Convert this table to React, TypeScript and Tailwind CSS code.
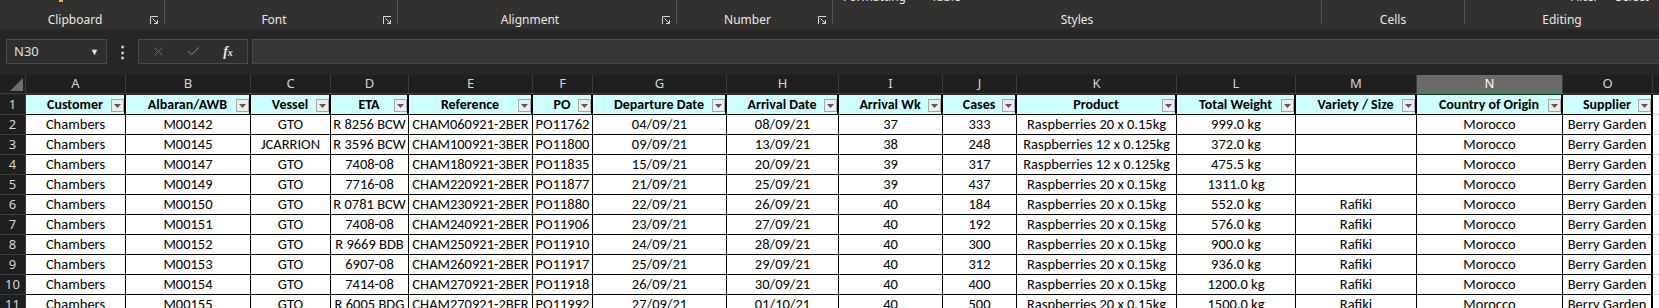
import React from "react";
import { X, Check } from "lucide-react";

const uiFont = { fontFamily: '"Noto Sans", "Open Sans", sans-serif' };
const cellFont = { fontFamily: 'Carlito, Lato, "Liberation Sans", sans-serif' };

const cols = [
  { l: "A", h: "Customer" },
  { l: "B", h: "Albaran/AWB" },
  { l: "C", h: "Vessel" },
  { l: "D", h: "ETA" },
  { l: "E", h: "Reference" },
  { l: "F", h: "PO" },
  { l: "G", h: "Departure Date" },
  { l: "H", h: "Arrival Date" },
  { l: "I", h: "Arrival Wk" },
  { l: "J", h: "Cases" },
  { l: "K", h: "Product" },
  { l: "L", h: "Total Weight" },
  { l: "M", h: "Variety / Size" },
  { l: "N", h: "Country of Origin" },
  { l: "O", h: "Supplier" },
];

const p20 = "Raspberries 20 x 0.15kg";
const p12 = "Raspberries 12 x 0.125kg";

// [awb, vessel, eta, ref, po, dep, arr, wk, cases, product, weight, variety]
const rows = [
  ["M00142", "GTO", "R 8256 BCW", "CHAM060921-2BER", "PO11762", "04/09/21", "08/09/21", "37", "333", p20, "999.0 kg", ""],
  ["M00145", "JCARRION", "R 3596 BCW", "CHAM100921-3BER", "PO11800", "09/09/21", "13/09/21", "38", "248", p12, "372.0 kg", ""],
  ["M00147", "GTO", "7408-08", "CHAM180921-3BER", "PO11835", "15/09/21", "20/09/21", "39", "317", p12, "475.5 kg", ""],
  ["M00149", "GTO", "7716-08", "CHAM220921-2BER", "PO11877", "21/09/21", "25/09/21", "39", "437", p20, "1311.0 kg", ""],
  ["M00150", "GTO", "R 0781 BCW", "CHAM230921-2BER", "PO11880", "22/09/21", "26/09/21", "40", "184", p20, "552.0 kg", "Rafiki"],
  ["M00151", "GTO", "7408-08", "CHAM240921-2BER", "PO11906", "23/09/21", "27/09/21", "40", "192", p20, "576.0 kg", "Rafiki"],
  ["M00152", "GTO", "R 9669 BDB", "CHAM250921-2BER", "PO11910", "24/09/21", "28/09/21", "40", "300", p20, "900.0 kg", "Rafiki"],
  ["M00153", "GTO", "6907-08", "CHAM260921-2BER", "PO11917", "25/09/21", "29/09/21", "40", "312", p20, "936.0 kg", "Rafiki"],
  ["M00154", "GTO", "7414-08", "CHAM270921-2BER", "PO11918", "26/09/21", "30/09/21", "40", "400", p20, "1200.0 kg", "Rafiki"],
  ["M00155", "GTO", "R 6005 BDG", "CHAM270921-2BER", "PO11992", "27/09/21", "01/10/21", "40", "500", p20, "1500.0 kg", "Rafiki"],
];

const Launcher = () => (
  <svg width="9" height="9" viewBox="0 0 9 9" fill="none" stroke="#d4d4d4" strokeWidth="1">
    <path d="M0.5 8V0.5H8" />
    <path d="M2.5 2.5L7.5 7.5M4 7.5H7.5V4" />
  </svg>
);

const groups = [
  { name: "Clipboard", w: "w-[165px]", launch: true },
  { name: "Font", w: "w-[233px]", launch: true },
  { name: "Alignment", w: "w-[279px]", launch: true },
  { name: "Number", w: "w-[156px]", launch: true },
  { name: "Styles", w: "w-[489px]", launch: false },
  { name: "Cells", w: "w-[143px]", launch: false },
  { name: "Editing", w: "flex-1", launch: false },
];

function Ribbon() {
  return (
    <div className="h-[29px] bg-[#323130] flex text-[#e8e8e8] text-[12px]" style={uiFont}>
      {groups.map((g, i) => (
        <div key={g.name} className={`${g.w} flex h-full`}>
          <div className="flex-1 flex flex-col">
            <div className="h-[12px] overflow-hidden">
              {g.name === "Clipboard" && <div className="ml-[59px] w-[4px] h-[2px] bg-[#f2b233]" />}
              {g.name === "Styles" && (
                <div className="flex gap-[25px] ml-[10px] -mt-[11px] leading-[16px]">
                  <span>Formatting</span>
                  <span>Table</span>
                </div>
              )}
              {g.name === "Editing" && (
                <div className="flex gap-[17px] ml-[105px] -mt-[11px] leading-[16px]">
                  <span>Filter</span>
                  <span>Select</span>
                </div>
              )}
            </div>
            <div className="flex items-center h-[16px]">
              <div className="flex-1 text-center leading-[16px]">{g.name}</div>
              {g.launch && (
                <div className="w-[14px] flex items-center justify-start pt-[1px]">
                  <Launcher />
                </div>
              )}
            </div>
          </div>
          {i < groups.length - 1 && <div className="w-px h-[24px] bg-[#555]" />}
        </div>
      ))}
    </div>
  );
}

function FormulaBar() {
  return (
    <div className="bg-[#262626] pt-[10px] pb-[11px] flex items-center text-[#e0e0e0]" style={uiFont}>
      <div className="ml-[6px] w-[101px] h-[25px] bg-[#2e2e2e] border border-[#4a4a4a] flex items-center justify-between px-[7px] text-[13px]">
        <span>N30</span>
        <span className="text-[9px] text-[#e8e8e8]">▼</span>
      </div>
      <div className="w-[31px] flex justify-center text-[15px] font-bold leading-none">⋮</div>
      <div className="w-[110px] h-[25px] bg-[#2e2e2e] border border-[#4a4a4a] flex items-center">
        <div className="w-[38px] flex justify-center">
          <X size={15} strokeWidth={1.6} color="#6c6c6c" />
        </div>
        <div className="w-[32px] flex justify-center">
          <Check size={15} strokeWidth={1.8} color="#6c6c6c" />
        </div>
        <div className="flex-1 flex justify-center italic text-[#e8e8e8]" style={{ fontFamily: '"Liberation Serif", serif' }}>
          <span className="text-[14px] font-bold">f</span>
          <span className="text-[10px] font-bold mt-[4px]">x</span>
        </div>
      </div>
      <div className="ml-[4px] flex-1 h-[25px] bg-[#363636] border border-[#4a4a4a] border-r-0" />
    </div>
  );
}

const gridCols =
  "grid grid-cols-[26px_100px_125px_80px_78px_124px_60px_134px_112px_104px_74px_160px_119px_121px_146px_90px_1fr]";

function RowHead({ n }: { n: number }) {
  return (
    <div className="bg-[#1f1f1f] border-b border-r border-[#3c3c3c] text-[#d4d4d4] text-[13px] flex items-center justify-center" style={uiFont}>
      {n}
    </div>
  );
}

function Cell({ v, last }: { v: string; last?: boolean }) {
  return (
    <div
      className={`bg-white border-b border-black ${last ? "border-r-2" : "border-r"} flex items-end justify-center overflow-hidden whitespace-nowrap text-[14.5px] leading-[19px] text-black`}
    >
      {v}
    </div>
  );
}

function Sheet() {
  return (
    <div className={`${gridCols} auto-rows-[20px] bg-[#262626]`} style={cellFont}>
      {/* column letters */}
      <div className="h-[19px] bg-[#1f1f1f] border-r border-b border-[#3c3c3c] flex items-end justify-end p-[2px]">
        <svg width="13" height="13" viewBox="0 0 13 13">
          <path d="M13 0V13H0Z" fill="#6e6e6e" />
        </svg>
      </div>
      {cols.map((c) => (
        <div
          key={c.l}
          className={`h-[19px] border-r border-[#3c3c3c] flex items-center justify-center text-[13px] ${
            c.l === "N" ? "bg-[#6a6a6a] text-white border-b-2 border-b-[#2f8f57]" : "bg-[#1f1f1f] text-[#d4d4d4] border-b"
          }`}
          style={uiFont}
        >
          {c.l}
        </div>
      ))}
      <div className="h-[19px] bg-[#1f1f1f] border-b border-[#3c3c3c]" />

      {/* header row */}
      <RowHead n={1} />
      {cols.map((c) => (
        <div
          key={c.h}
          className="relative bg-[#ccffff] border-b border-r-2 border-black flex items-end justify-center whitespace-nowrap overflow-hidden text-[14px] leading-[18px] font-bold text-black"
        >
          {c.h}
          <div className="absolute right-0 top-[4px] w-[13px] h-[13px] bg-[#ececec] border border-[#a5a5a5] flex items-center justify-center">
            <svg width="7" height="4" viewBox="0 0 7 4">
              <path d="M0 0H7L3.5 4Z" fill="#5a5a5a" />
            </svg>
          </div>
        </div>
      ))}
      <div className="bg-white border-b border-[#d4d4d4]" />

      {rows.map((r, i) => (
        <React.Fragment key={i}>
          <RowHead n={i + 2} />
          <Cell v="Chambers" />
          {r.map((v, j) => (
            <Cell key={j} v={v} />
          ))}
          <Cell v="Morocco" />
          <Cell v="Berry Garden" last />
          <div className="bg-white border-b border-[#d4d4d4]" />
        </React.Fragment>
      ))}
    </div>
  );
}

export default function App() {
  return (
    <div className="w-[1659px] h-[308px] overflow-hidden bg-[#262626]">
      <Ribbon />
      <FormulaBar />
      <Sheet />
    </div>
  );
}
